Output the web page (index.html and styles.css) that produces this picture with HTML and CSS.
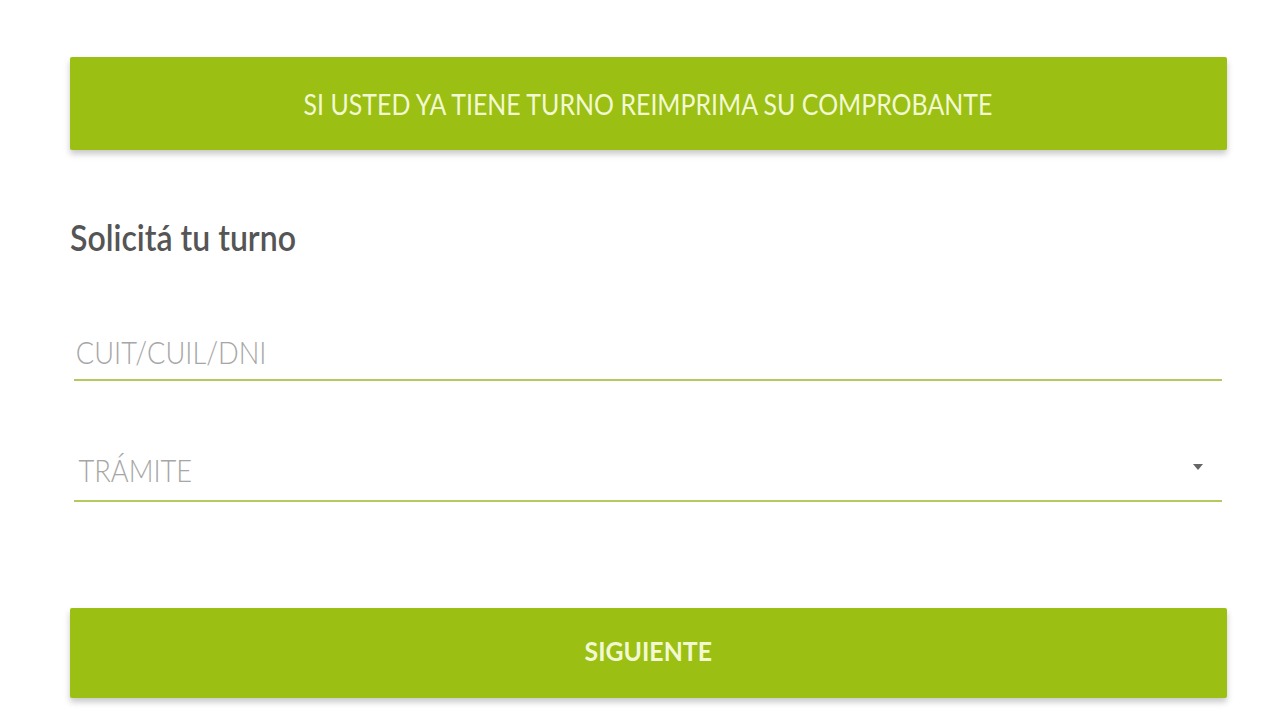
FILE: index.html
```html
<!DOCTYPE html>
<html lang="es">
<head>
<meta charset="utf-8">
<title>Solicitá tu turno</title>
<link rel="stylesheet" href="styles.css">
</head>
<body>
<main class="page">
  <button class="btn btn-top"><span class="sq">SI USTED YA TIENE TURNO REIMPRIMA SU COMPROBANTE</span></button>
  <h1 class="title"><span class="sq">Solicitá tu turno</span></h1>
  <div class="field">
    <span class="ph sq">CUIT/CUIL/DNI</span>
  </div>
  <div class="field field-select">
    <span class="ph sq">TRÁMITE</span>
    <span class="caret"></span>
  </div>
  <button class="btn btn-next"><span class="sq">SIGUIENTE</span></button>
</main>
</body>
</html>
```

FILE: styles.css
```css
html, body {
  margin: 0;
  padding: 0;
  background: #ffffff;
}
body {
  font-family: Lato, "Open Sans", sans-serif;
  width: 1280px;
  height: 726px;
  overflow: hidden;
}
.page {
  display: flex;
  flex-direction: column;
  padding: 57px 53px 0 70px;
}
.sq {
  display: inline-block;
  transform: scaleX(0.89);
}
.btn {
  border: none;
  border-radius: 2px;
  background: #9bbf12;
  color: #f2f9d2;
  font-family: Lato, sans-serif;
  font-weight: 400;
  width: 1157px;
  box-shadow: 0 4px 6px rgba(0,0,0,0.22);
  display: flex;
  align-items: center;
  justify-content: center;
  padding: 0;
}
.btn-top {
  height: 93px;
  font-size: 28px;
}
.btn-next {
  height: 90px;
  font-size: 27px;
  font-weight: 700;
  margin-top: 106px;
  padding-bottom: 5px;
}
.btn-next .sq {
  transform: scaleX(0.92);
}
.title {
  margin: 67px 0 0 0;
  font-size: 36px;
  font-weight: 600;
  color: #555555;
  line-height: 40px;
}
.title .sq {
  transform-origin: left center;
}
.field {
  margin: 68px 0 0 4px;
  width: 1148px;
  height: 54px;
  border-bottom: 2px solid #b4ca5e;
  display: flex;
  align-items: center;
  position: relative;
}
.field-select {
  margin-top: 59px;
  height: 60px;
}
.ph {
  font-size: 31px;
  font-weight: 300;
  color: #a6a6a6;
  transform: scaleX(0.88);
  transform-origin: left center;
  padding-left: 2px;
}
.field-select .ph {
  padding-left: 5px;
}
.caret {
  position: absolute;
  right: 19px;
  top: 24px;
  width: 0;
  height: 0;
  border-left: 5px solid transparent;
  border-right: 5px solid transparent;
  border-top: 6px solid #666666;
}
```
